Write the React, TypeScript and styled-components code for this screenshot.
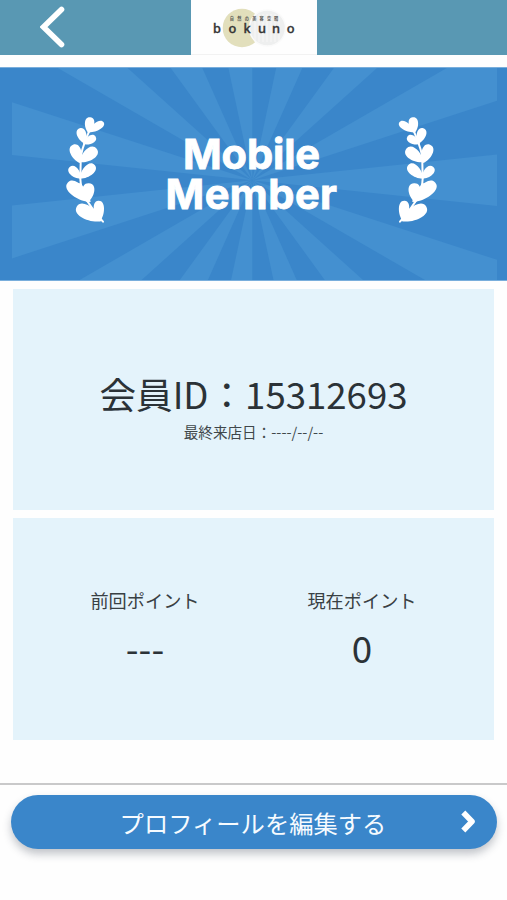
import React from "react";
import styled, { createGlobalStyle } from "styled-components";

const GlobalStyle = createGlobalStyle`
  * { box-sizing: border-box; }
  body {
    margin: 0;
    background: #fefefe;
    color: #2b3237;
    font-family: "Noto Sans CJK JP", "Noto Sans", sans-serif;
  }
`;

const Page = styled.main`
  display: flex;
  flex-direction: column;
  width: 507px;
  height: 900px;
  overflow: hidden;
`;

const Header = styled.header`
  display: grid;
  grid-template-columns: 191px 126px 1fr;
  height: 55px;
  background: #5998b3;
`;

const BackButton = styled.button`
  display: flex;
  align-items: center;
  width: 70px;
  height: 54px;
  padding: 0 0 0 40px;
  border: 0;
  background: none;
`;

const LogoBox = styled.div`
  background: #fefefe;
  border-bottom: 1px solid #f2f2f2;
  svg { display: block; }
`;

const Banner = styled.section`
  position: relative;
  display: grid;
  grid-template-columns: 62px 50px 1fr 50px 66px;
  height: 214px;
  margin-top: 12px;
  padding-top: 48px;
  background: #3a86ca;
  border-top: 1px solid #79aedc;
  border-bottom: 1px solid #79aedc;
`;

const RaysSvg = styled.svg`
  position: absolute;
  left: 12px;
  top: 0;
`;

const LaurelSvg = styled.svg<{ $flip?: boolean }>`
  position: relative;
  grid-column: ${(p) => (p.$flip ? 4 : 2)};
  grid-row: 1;
  transform: ${(p) => (p.$flip ? "scaleX(-1)" : "none")};
`;

const BannerTitle = styled.h1`
  position: relative;
  grid-column: 3;
  grid-row: 1;
  margin: 18px 0 0;
  color: #fff;
  font: 700 41.5px/40px Inter, "Liberation Sans", sans-serif;
  text-align: center;
  -webkit-text-stroke: 0.9px #fff;
`;

const TitleLine = styled.span<{ $spacing: string }>`
  display: block;
  letter-spacing: ${(p) => p.$spacing};
`;

const Card = styled.section`
  height: 222px;
  margin: 8px 13px 0;
  background: #e4f3fb;
`;

const IdCard = styled(Card)`
  display: flex;
  flex-direction: column;
  align-items: center;
  height: 221px;
  padding-top: 83px;
`;

const MemberId = styled.div`
  font-size: 36.6px;
  line-height: 44px;
  white-space: nowrap;
`;

const LastVisit = styled.div`
  margin-top: 6px;
  color: #40474a;
  font-size: 14.6px;
  line-height: 20px;
`;

const PointCard = styled(Card)`
  display: grid;
  grid-template-columns: 217px 217px;
  justify-content: center;
  padding-top: 69px;
`;

const PointColumn = styled.div`
  text-align: center;
`;

const PointLabel = styled.div`
  color: #394043;
  font-size: 18.2px;
  line-height: 26px;
`;

const PointValue = styled.div`
  margin-top: 12px;
  font-size: 36.8px;
  line-height: 44px;
`;

const Footer = styled.footer`
  margin-top: 43px;
  padding: 10px 10px 0 11px;
  border-top: 2px solid #c9c9ca;
`;

const EditButton = styled.button`
  display: grid;
  grid-template-columns: 48px 1fr 38px;
  align-items: center;
  width: 100%;
  height: 54px;
  padding: 0;
  border: 0;
  border-radius: 27px;
  background: #3a86ca;
  color: #f6fbff;
  font: 400 24.3px/36px "Noto Sans CJK JP", sans-serif;
  box-shadow: 0 5px 9px rgba(30, 40, 60, 0.27);
`;

const EditLabel = styled.span`
  grid-column: 2;
  padding-top: 2px;
  padding-right: 12px;
  white-space: nowrap;
  text-align: center;
`;

const rad = (deg: number) => (deg * Math.PI) / 180;

// Fifteen 12-degree beams, evenly spaced around the banner's centre.
const Rays = () => (
  <RaysSvg width="485" height="212" viewBox="12 68 485 212">
    {Array.from({ length: 15 }, (_, i) => {
      const at = (deg: number) =>
        `${252.3 + 400 * Math.cos(rad(deg))},${180.3 - 400 * Math.sin(rad(deg))}`;
      return (
        <path key={i} d={`M252.3,180.3 L${at(i * 24 - 6)} L${at(i * 24 + 6)}Z`} fill="#4490d0" />
      );
    })}
  </RaysSvg>
);

// Each leaf: base point, tip point, half width.
const leaves = [
  [115, 99, 121, 52, 22],
  [113, 97, 161, 67, 19],
  [104, 131, 89, 85, 22],
  [99, 132, 137, 110, 19],
  [90, 189, 69, 134, 26],
  [89, 186, 140, 146, 28],
  [93, 236, 59, 201, 22],
  [89, 236, 134, 195, 25],
  [122, 306, 53, 248, 32],
  [112, 308, 117, 250, 28],
  [98, 292, 86, 250, 15],
  [156, 363, 80, 320, 32],
  [150, 364, 145, 302, 24],
];

const leafPath = ([bx, by, tx, ty, w]: number[]) => {
  const dx = tx - bx;
  const dy = ty - by;
  const len = Math.hypot(dx, dy);
  const nx = (-dy / len) * w;
  const ny = (dx / len) * w;
  const p = (t: number, s: number) => `${bx + dx * t + nx * s},${by + dy * t + ny * s}`;
  return `M${bx},${by} C${p(0.3, 0.75)} ${p(1, 0.95)} ${tx},${ty} C${p(1, -0.95)} ${p(0.3, -0.75)} ${bx},${by}Z`;
};

const Laurel = ({ flip }: { flip?: boolean }) => (
  <LaurelSvg $flip={flip} width="50" height="110" viewBox="36 48 150 330" fill="#fff">
    {leaves.map((leaf, i) => (
      <path key={i} d={leafPath(leaf)} />
    ))}
    <path
      d="M121 86 Q110 110 103 131 Q90 165 92 190 L91 236 Q92 265 105 290 Q120 320 159 365"
      fill="none"
      stroke="#fff"
      strokeWidth="6"
      strokeLinecap="round"
    />
  </LaurelSvg>
);

const Logo = () => (
  <svg width="126" height="54" viewBox="191 0 126 54">
    <circle cx="242" cy="28" r="19.3" fill="#e2dfbc" />
    <circle cx="267.5" cy="28" r="18" fill="#eeefef" stroke="#fafafa" strokeWidth="1.5" />
    {[255, 259, 263, 267, 271, 275, 279].map((x) => (
      <path key={x} d={`M${x} 14V42`} stroke="#fafafa" strokeWidth="0.8" />
    ))}
    <text
      y="20.3"
      x="231.8 239.4 246.9 254.4 261.7 269 276"
      textAnchor="middle"
      fontFamily="Noto Sans CJK JP, sans-serif"
      fontSize="4.2"
      fontWeight="700"
      fill="#5b5b56"
    >
      自然の美容空間
    </text>
    <text
      y="33"
      x="217 232.5 247 262 276 290.7"
      textAnchor="middle"
      fontFamily="Noto Sans, sans-serif"
      fontSize="12.8"
      fontWeight="500"
      fill="#343434"
      stroke="#343434"
      strokeWidth="0.35"
    >
      bokuno
    </text>
  </svg>
);

export default function App() {
  return (
    <>
      <GlobalStyle />
      <Page>
        <Header>
          <BackButton aria-label="戻る">
            <svg width="25" height="42" viewBox="0 0 25 42" fill="none">
              <path d="M21.5 3.5L3.5 21L21.5 38.5" stroke="#fff" strokeWidth="5.6" strokeLinecap="round" />
            </svg>
          </BackButton>
          <LogoBox>
            <Logo />
          </LogoBox>
        </Header>
        <Banner>
          <Rays />
          <Laurel />
          <BannerTitle>
            <TitleLine $spacing="-0.1px">Mobile</TitleLine>
            <TitleLine $spacing="0.5px">Member</TitleLine>
          </BannerTitle>
          <Laurel flip />
        </Banner>
        <IdCard>
          <MemberId>会員ID：15312693</MemberId>
          <LastVisit>最終来店日：----/--/--</LastVisit>
        </IdCard>
        <PointCard>
          <PointColumn>
            <PointLabel>前回ポイント</PointLabel>
            <PointValue>---</PointValue>
          </PointColumn>
          <PointColumn>
            <PointLabel>現在ポイント</PointLabel>
            <PointValue>0</PointValue>
          </PointColumn>
        </PointCard>
        <Footer>
          <EditButton>
            <EditLabel>プロフィールを編集する</EditLabel>
            <svg width="20" height="26" viewBox="0 0 20 26" fill="none">
              <path d="M4.3 3.5L13 12.5L4.3 21.5" stroke="#fff" strokeWidth="5.6" strokeLinejoin="round" />
            </svg>
          </EditButton>
        </Footer>
      </Page>
    </>
  );
}
